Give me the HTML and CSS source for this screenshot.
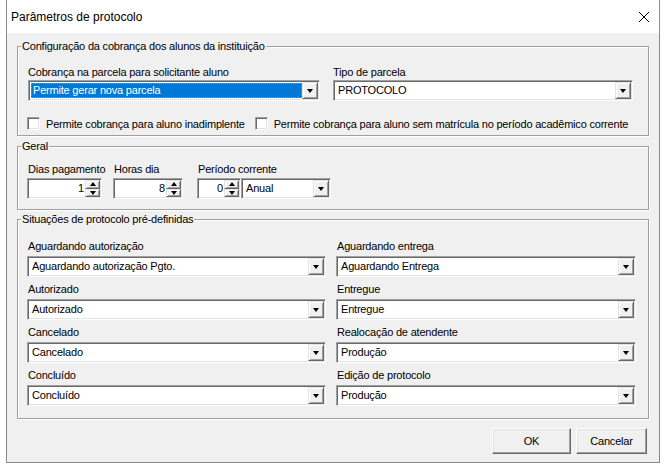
FILE: index.html
```html
<!DOCTYPE html>
<html lang="pt">
<head>
<meta charset="utf-8">
<link rel="stylesheet" href="styles.css">
</head>
<body>
<div class="window">
  <div class="titlebar">
    <span class="title">Parâmetros de protocolo</span>
    <svg class="close" width="12" height="12" viewBox="0 0 12 12"><path d="M1 1 L11 11 M11 1 L1 11" stroke="#000" stroke-width="1" fill="none"/></svg>
  </div>
  <div class="client">
    <fieldset class="group g1">
      <legend>Configuração da cobrança dos alunos da instituição</legend>
      <div class="cols1">
        <div class="field">
          <div class="lbl">Cobrança na parcela para solicitante aluno</div>
          <div class="combo"><div class="val"><span class="sel">Permite gerar nova parcela</span></div><div class="drop"><i></i></div></div>
        </div>
        <div class="field">
          <div class="lbl">Tipo de parcela</div>
          <div class="combo"><div class="val">PROTOCOLO</div><div class="drop"><i></i></div></div>
        </div>
      </div>
      <div class="checks">
        <div class="check"><span class="box"></span><span>Permite cobrança para aluno inadimplente</span></div>
        <div class="check c2"><span class="box"></span><span>Permite cobrança para aluno sem matrícula no período acadêmico corrente</span></div>
      </div>
    </fieldset>

    <fieldset class="group g2">
      <legend>Geral</legend>
      <div class="cols2">
        <div class="field">
          <div class="lbl">Dias pagamento</div>
          <div class="spin w1"><div class="num">1</div><div class="ud"><div class="up"><i></i></div><div class="dn"><i></i></div></div></div>
        </div>
        <div class="field">
          <div class="lbl">Horas dia</div>
          <div class="spin w2"><div class="num">8</div><div class="ud"><div class="up"><i></i></div><div class="dn"><i></i></div></div></div>
        </div>
        <div class="field">
          <div class="lbl">Período corrente</div>
          <div class="pair">
            <div class="spin w3"><div class="num">0</div><div class="ud"><div class="up"><i></i></div><div class="dn"><i></i></div></div></div>
            <div class="combo small"><div class="val">Anual</div><div class="drop"><i></i></div></div>
          </div>
        </div>
      </div>
    </fieldset>

    <fieldset class="group g3">
      <legend>Situações de protocolo pré-definidas</legend>
      <div class="cols3">
        <div class="field">
          <div class="lbl">Aguardando autorização</div>
          <div class="combo"><div class="val">Aguardando autorização Pgto.</div><div class="drop"><i></i></div></div>
        </div>
        <div class="field">
          <div class="lbl">Aguardando entrega</div>
          <div class="combo"><div class="val">Aguardando Entrega</div><div class="drop"><i></i></div></div>
        </div>
        <div class="field">
          <div class="lbl">Autorizado</div>
          <div class="combo"><div class="val">Autorizado</div><div class="drop"><i></i></div></div>
        </div>
        <div class="field">
          <div class="lbl">Entregue</div>
          <div class="combo"><div class="val">Entregue</div><div class="drop"><i></i></div></div>
        </div>
        <div class="field">
          <div class="lbl">Cancelado</div>
          <div class="combo"><div class="val">Cancelado</div><div class="drop"><i></i></div></div>
        </div>
        <div class="field">
          <div class="lbl">Realocação de atendente</div>
          <div class="combo"><div class="val">Produção</div><div class="drop"><i></i></div></div>
        </div>
        <div class="field">
          <div class="lbl">Concluído</div>
          <div class="combo"><div class="val">Concluído</div><div class="drop"><i></i></div></div>
        </div>
        <div class="field">
          <div class="lbl">Edição de protocolo</div>
          <div class="combo"><div class="val">Produção</div><div class="drop"><i></i></div></div>
        </div>
      </div>
    </fieldset>

    <div class="buttons">
      <div class="btn ok">OK</div>
      <div class="btn cancel">Cancelar</div>
    </div>
  </div>
</div>
</body>
</html>
```
FILE: styles.css
```css
* { box-sizing: border-box; }
html, body { margin: 0; padding: 0; background: #ffffff; }
body {
  font-family: "Liberation Sans", Arial, sans-serif;
  font-size: 11px;
  color: #000;
}
.window {
  margin-left: 6px;
  width: 654px;
  height: 463px;
  border: 1px solid #8a8a8a;
  border-top: none;
  background: #f0f0f0;
  display: flex;
  flex-direction: column;
}
.titlebar {
  height: 33px;
  background: #fff;
  display: flex;
  align-items: center;
  justify-content: space-between;
  padding: 1px 9px 0 4px;
}
.title { font-size: 12px; }
.client {
  flex: 1;
  padding: 7px 10px 0 10px;
  display: flex;
  flex-direction: column;
  letter-spacing: -0.2px;
}
.group {
  margin: 0;
  border: 1px solid #a0a0a0;
  box-shadow: inset 1px 1px 0 #fff, 1px 1px 0 #fff;
  padding: 0;
  min-width: 0;
}
.group legend {
  padding: 0 1px;
  line-height: 13px;
  background: #f0f0f0;
}
.lbl { line-height: 13px; white-space: nowrap; }

.g1 { padding: 13px 15px 5px 10px; }
.g1 legend { margin-left: -7px; }
.cols1 { display: grid; grid-template-columns: 292px 300px; column-gap: 13px; }
.cols1 .combo { margin-top: 1px; }
.checks { display: flex; margin-top: 16px; height: 13px; align-items: center; }
.check { display: flex; align-items: center; white-space: nowrap; }
.check .box {
  width: 13px; height: 13px; background: #fff;
  border: 1px solid; border-color: #a0a0a0 #fff #fff #a0a0a0;
  box-shadow: inset 1px 1px 0 #696969, inset -1px -1px 0 #e3e3e3;
  margin-right: 6px;
  margin-left: -1px;
}
.check.c2 { margin-left: 11px; }

.g2 { margin-top: 4px; padding: 10px 10px 10px 9px; }
.g2 legend { margin-left: -6px; }
.cols2 { display: flex; }
.cols2 .field:nth-child(1) { width: 86px; }
.cols2 .field:nth-child(2) { width: 84px; }
.cols2 .lbl { margin-bottom: 2px; margin-left: 1px; }
.pair { display: flex; }

.g3 { margin-top: 3px; padding: 14px 12px 12px 9px; }
.g3 legend { margin-left: -6px; }
.cols3 { display: grid; grid-template-columns: 299px 300px; column-gap: 10px; row-gap: 6px; }
.cols3 .lbl { margin-bottom: 3px; margin-left: 1px; }

.combo {
  height: 21px;
  background: #fff;
  border: 1px solid; border-color: #a0a0a0 #fff #fff #a0a0a0;
  box-shadow: inset 1px 1px 0 #696969, inset -1px -1px 0 #e3e3e3;
  display: flex;
  padding: 2px;
}
.combo .val {
  flex: 1;
  line-height: 15px;
  padding-left: 2px;
  white-space: nowrap;
  overflow: hidden;
}
.combo .sel {
  display: block;
  background: #0078d7;
  color: #fff;
  margin-left: -2px;
  padding-left: 2px;
  height: 15px;
  outline: 1px dotted #e08a00;
  outline-offset: -1px;
}
.drop, .ud > div {
  background: #f0f0f0;
  border: 1px solid; border-color: #e3e3e3 #696969 #696969 #e3e3e3;
  box-shadow: inset 1px 1px 0 #fff, inset -1px -1px 0 #a0a0a0;
  display: flex; align-items: center; justify-content: center;
}
.drop { width: 16px; height: 17px; margin-top: -1px; margin-right: -1px; }
.drop i {
  width: 0; height: 0;
  border-left: 3.5px solid transparent;
  border-right: 3.5px solid transparent;
  border-top: 4px solid #000;
  margin-top: 1px;
}
.combo.small { width: 90px; }

.spin {
  height: 21px;
  background: #fff;
  border: 1px solid; border-color: #a0a0a0 #fff #fff #a0a0a0;
  box-shadow: inset 1px 1px 0 #696969, inset -1px -1px 0 #e3e3e3;
  display: flex;
  padding: 2px 1px 2px 2px;
}
.spin.w1 { width: 75px; }
.spin.w2 { width: 70px; }
.spin.w3 { width: 44px; }
.spin .num { flex: 1; text-align: right; line-height: 15px; padding-right: 1px; }
.ud { width: 15px; display: flex; flex-direction: column; margin-top: -1px; margin-bottom: -1px; }
.ud > div { flex: 1; }
.ud .up i {
  width: 0; height: 0;
  border-left: 3.5px solid transparent;
  border-right: 3.5px solid transparent;
  border-bottom: 4px solid #000;
}
.ud .dn i {
  width: 0; height: 0;
  border-left: 3.5px solid transparent;
  border-right: 3.5px solid transparent;
  border-top: 4px solid #000;
}

.buttons {
  display: flex;
  justify-content: flex-end;
  gap: 5px;
  margin-top: 9px;
  padding-right: 2px;
}
.btn {
  height: 26px;
  background: #f0f0f0;
  border: 1px solid; border-color: #fff #696969 #696969 #fff;
  box-shadow: inset -1px -1px 0 #a0a0a0, inset 1px 1px 0 #e3e3e3;
  display: flex; align-items: center; justify-content: center;
  font-size: 11px;
}
.btn.ok { width: 79px; }
.btn.cancel { width: 71px; }
```
